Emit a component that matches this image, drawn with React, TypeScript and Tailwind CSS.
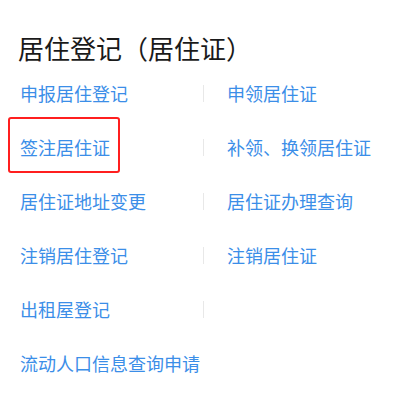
import React from "react"

const rows: [string, string | null][] = [
  ["申报居住登记", "申领居住证"],
  ["签注居住证", "补领、换领居住证"],
  ["居住证地址变更", "居住证办理查询"],
  ["注销居住登记", "注销居住证"],
  ["出租屋登记", ""],
]

export default function App() {
  return (
    <div
      className="w-[399px] h-[402px] bg-white px-5 pt-[30px]"
      style={{ fontFamily: '"Noto Sans CJK SC", "Noto Sans", sans-serif' }}
    >
      <h2 className="text-[26px] leading-[36px] text-[#1a1a1a] -ml-[2px]">居住登记（居住证）</h2>

      <div className="flex flex-col">
        {rows.map(([left, right], i) => (
          <div key={left} className="flex h-[54px] items-center text-[18px] text-[#3b8ee8]">
            <div className="w-[183px] shrink-0">
              {i === 1 ? (
                <span className="relative inline-block">
                  {left}
                  {/* highlight box */}
                  <span className="absolute left-[-12px] top-[-17px] h-[56px] w-[112px] rounded-[3px] border-2 border-[#ff1f1f]" />
                </span>
              ) : (
                left
              )}
            </div>
            <span className="h-[17px] w-px bg-[#e8e8e8]" />
            {right !== null && <div className="pl-[23px]">{right}</div>}
          </div>
        ))}
        <div className="flex h-[54px] items-center text-[18px] text-[#3b8ee8]">流动人口信息查询申请</div>
      </div>
    </div>
  )
}
